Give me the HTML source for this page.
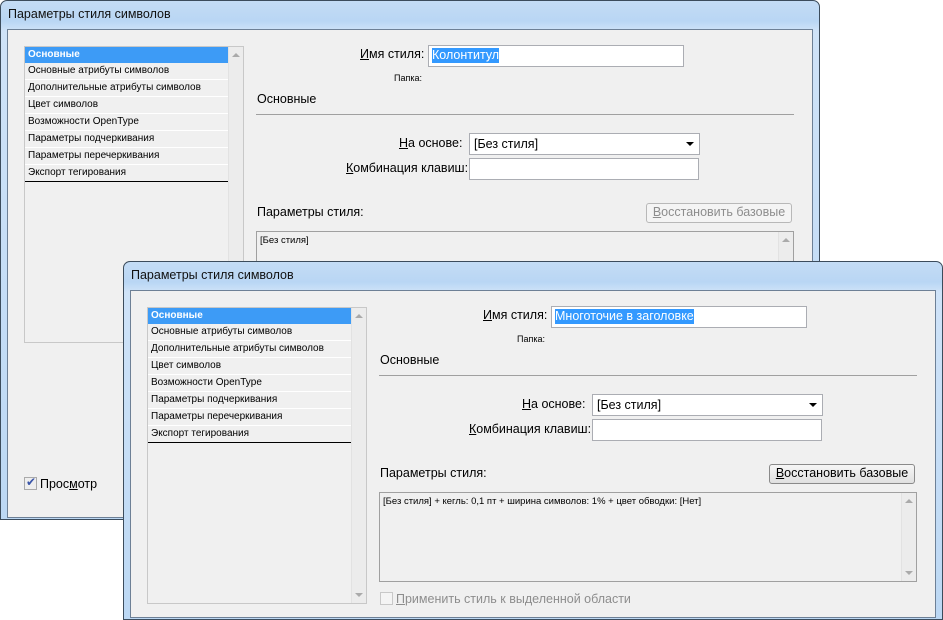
<!DOCTYPE html>
<html><head><meta charset="utf-8"><style>
*{box-sizing:border-box;margin:0;padding:0}
html{overflow:hidden}
body{width:943px;height:620px;background:#fff;overflow:hidden;position:relative;font-family:"Liberation Sans",sans-serif;color:#000}
.win{position:absolute;width:820px;height:520px;border:1px solid #3c4c5c;border-radius:7px 7px 0 0;background:linear-gradient(180deg,#c4dcf5 0,#b9d6f4 20px,#cfe3f8 30px,#bcd8f4 100%);overflow:hidden}
.title{position:absolute;left:7px;top:6px;font-size:12.5px;color:#111}
.client{position:absolute;left:6px;top:28px;width:806px;height:489px;background:#f0f0f0;border:1px solid #6d8096;overflow:hidden}
.a{position:absolute;white-space:nowrap}
.list{position:absolute;left:16px;top:16px;width:220px;height:297px;background:#f0f0f0;border:1px solid #c8c8c8}
.list .it{height:17px;line-height:16px;font-size:10px;padding-left:3px;border-bottom:1px solid #fff;width:203px}
.list .sel{background:#3d9bf6;color:#fff;font-weight:bold;height:16px;border:0}
.list .last{border-bottom:1px solid #000}
.sb{position:absolute;right:0;top:0;width:15px;height:100%;background:#ececec;border-left:1px solid #e2e2e2}
.up,.dn{position:absolute;left:3px;width:0;height:0;border-left:4px solid transparent;border-right:4px solid transparent}
.up{top:6px;border-bottom:4px solid #aaa}.dn{bottom:6px;border-top:4px solid #aaa}
.lbl{font-size:12.5px}
.inp{position:absolute;background:#fff;border:1px solid #abadb3;height:22px}
.btn{position:absolute;border:1px solid #8a8a8a;border-radius:3px;background:linear-gradient(#f6f6f6,#e0e0e0);font-size:12.5px;text-align:center;line-height:17px}
.ta{position:absolute;border:1px solid #a0a0a0;background:#f0f0f0;font-size:9.5px;padding:3px 3px}
.cb{position:absolute;width:13px;height:13px;border:1px solid #aaa;background:#f4f4f4}
u{text-decoration:underline}
</style></head><body>

<div class="win" style="left:0;top:0">
 <div class="title">Параметры стиля символов</div>
 <div class="client">
  <div class="list">
   <div class="it sel">Основные</div>
   <div class="it">Основные атрибуты символов</div>
   <div class="it">Дополнительные атрибуты символов</div>
   <div class="it">Цвет символов</div>
   <div class="it">Возможности OpenType</div>
   <div class="it">Параметры подчеркивания</div>
   <div class="it">Параметры перечеркивания</div>
   <div class="it last">Экспорт тегирования</div>
   <div class="sb"><div class="up"></div><div class="dn"></div></div>
  </div>
  <div class="a lbl" style="left:352px;top:17px"><u>И</u>мя стиля:</div>
  <div class="inp" style="left:420px;top:15px;width:256px"><span style="position:absolute;left:3px;top:2px;background:#3399ff;color:#fff;font-size:12.5px;line-height:15px">Колонтитул</span></div>
  <div class="a" style="left:386px;top:43px;font-size:9px">Папка:</div>
  <div class="a lbl" style="left:249px;top:62px">Основные</div>
  <div class="a" style="left:248px;top:84px;width:538px;height:1px;background:#a0a0a0"></div>
  <div class="a lbl" style="left:391px;top:106px"><u>Н</u>а основе:</div>
  <div class="inp" style="left:461px;top:103px;width:231px"><span style="position:absolute;left:4px;top:3px;font-size:12.5px">[Без стиля]</span><span style="position:absolute;right:5px;top:8px;border-left:4px solid transparent;border-right:4px solid transparent;border-top:4px solid #000"></span></div>
  <div class="a lbl" style="left:338px;top:131px"><u>К</u>омбинация клавиш:</div>
  <div class="inp" style="left:461px;top:128px;width:230px"></div>
  <div class="a lbl" style="left:249px;top:175px">Параметры стиля:</div>
  <div class="btn" style="left:638px;top:173px;width:146px;height:20px;color:#8d8d8d;background:#f4f4f4;border-color:#b8b8b8"><u>В</u>осстановить базовые</div>
  <div class="ta" style="left:248px;top:201px;width:538px;height:95px">[Без стиля]<div class="sb"><div class="up"></div></div></div>
  <div class="cb" style="left:16px;top:447px;background:#eee"><span style="position:absolute;left:1px;top:-3px;font-size:12px;color:#3a55a8">✔</span></div>
  <div class="a lbl" style="left:32px;top:447px">Прос<u>м</u>отр</div>
 </div>
</div>

<div class="win" style="left:123px;top:261px;height:359px">
 <div class="title">Параметры стиля символов</div>
 <div class="client" style="height:328px">
  <div class="list">
   <div class="it sel">Основные</div>
   <div class="it">Основные атрибуты символов</div>
   <div class="it">Дополнительные атрибуты символов</div>
   <div class="it">Цвет символов</div>
   <div class="it">Возможности OpenType</div>
   <div class="it">Параметры подчеркивания</div>
   <div class="it">Параметры перечеркивания</div>
   <div class="it last">Экспорт тегирования</div>
   <div class="sb"><div class="up"></div><div class="dn"></div></div>
  </div>
  <div class="a lbl" style="left:352px;top:17px"><u>И</u>мя стиля:</div>
  <div class="inp" style="left:420px;top:15px;width:256px"><span style="position:absolute;left:3px;top:2px;background:#3399ff;color:#fff;font-size:12.5px;line-height:15px">Многоточие в заголовке</span></div>
  <div class="a" style="left:386px;top:43px;font-size:9px">Папка:</div>
  <div class="a lbl" style="left:249px;top:62px">Основные</div>
  <div class="a" style="left:248px;top:84px;width:538px;height:1px;background:#a0a0a0"></div>
  <div class="a lbl" style="left:391px;top:106px"><u>Н</u>а основе:</div>
  <div class="inp" style="left:461px;top:103px;width:231px"><span style="position:absolute;left:4px;top:3px;font-size:12.5px">[Без стиля]</span><span style="position:absolute;right:5px;top:8px;border-left:4px solid transparent;border-right:4px solid transparent;border-top:4px solid #000"></span></div>
  <div class="a lbl" style="left:338px;top:131px"><u>К</u>омбинация клавиш:</div>
  <div class="inp" style="left:461px;top:128px;width:230px"></div>
  <div class="a lbl" style="left:249px;top:175px">Параметры стиля:</div>
  <div class="btn" style="left:638px;top:173px;width:146px;height:20px"><u>В</u>осстановить базовые</div>
  <div class="ta" style="left:248px;top:201px;width:538px;height:90px">[Без стиля] + кегль: 0,1 пт + ширина символов: 1% + цвет обводки: [Нет]<div class="sb"><div class="up"></div><div class="dn"></div></div></div>
  <div class="cb" style="left:249px;top:301px;border-color:#c8c8c8"></div>
  <div class="a lbl" style="left:265px;top:301px;color:#8d8d8d"><u>П</u>рименить стиль к выделенной области</div>
 </div>
</div>
</body></html>
